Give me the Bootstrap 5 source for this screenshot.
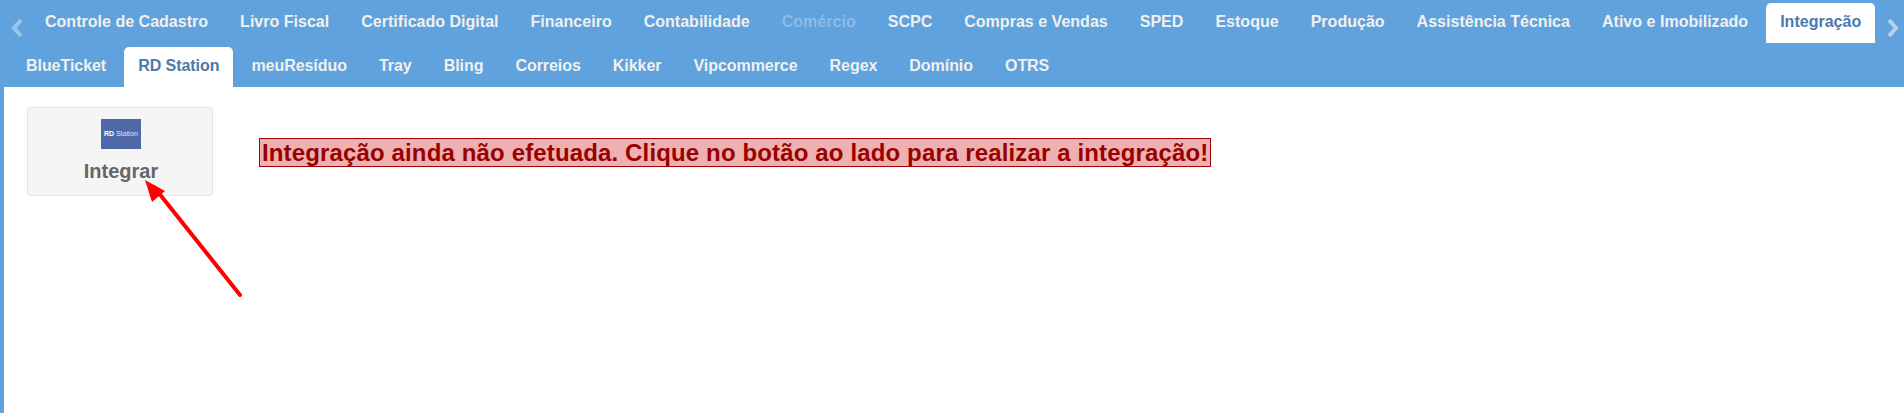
<!DOCTYPE html>
<html lang="pt-BR">
<head>
    <meta charset="UTF-8">
    <title>Integração - RD Station</title>
    <link href="https://cdn.jsdelivr.net/npm/bootstrap@5.3.0/dist/css/bootstrap.min.css" rel="stylesheet">
    <style>
        html, body { height: 100%; overflow: hidden; }
        body { font-family: "Liberation Sans", Arial, sans-serif; background: #fff; }
        .page-wrap { position: relative; min-height: 100%; border-left: 4px solid #5fa2dd; }
        .tab-bar { background: #5fa2dd; height: 87px; margin-left: -4px; padding-top: 3px; }
        .tab-row { height: 40px; flex-wrap: nowrap; gap: 4px; }
        .tab-row-main { padding-left: 31px; margin-bottom: 4px; letter-spacing: .02px; }
        .tab-row-sub { padding-left: 12px; letter-spacing: -.05px; }
        .tab-row .nav-link { height: 40px; padding: 0 14px; line-height: 38px; font-size: 16px; font-weight: 700; color: #f0f0f0; border-radius: 5px 5px 0 0; white-space: nowrap; }
        .tab-row .nav-link.active { background: #fff; color: #4a79ac; }
        .tab-row .nav-link.disabled { color: #8ebbe6; }
        .tab-arrow { position: absolute; top: 18px; width: 14px; height: 20px; }
        .tab-arrow-left { left: 6px; }
        .tab-arrow-right { left: 1882px; }
        .content-row { padding: 20px 0 0 23px; gap: 46px; }
        .integrate-btn { width: 186px; height: 89px; padding: 11px 0 12px 2px; background: #f5f5f5; border: 1px solid #e3e3e3; border-radius: 4px; color: #666; font-size: 20px; font-weight: 700; line-height: 24px; }
        .rd-logo { width: 40px; height: 30px; margin: 0 auto 10px; background: #4f68a8; color: #dfe4f2; font-size: 7px; line-height: 30px; font-weight: 400; white-space: nowrap; }
        .rd-logo b { color: #fff; }
        .integrate-msg { margin-top: 31px; height: 29px; padding: 0 2px; background: #eeb0b0; border: 1px solid #a00000; color: #990000; font-size: 24px; font-weight: 700; line-height: 27px; white-space: nowrap; letter-spacing: .14px; }
        .pointer-arrow { position: absolute; left: 136px; top: 172px; width: 120px; height: 135px; }
    </style>
</head>
<body>
<div class="page-wrap">
    <div class="tab-bar">
        <ul class="nav tab-row tab-row-main">
            <li class="nav-item"><a class="nav-link" href="#">Controle de Cadastro</a></li>
            <li class="nav-item"><a class="nav-link" href="#">Livro Fiscal</a></li>
            <li class="nav-item"><a class="nav-link" href="#">Certificado Digital</a></li>
            <li class="nav-item"><a class="nav-link" href="#">Financeiro</a></li>
            <li class="nav-item"><a class="nav-link" href="#">Contabilidade</a></li>
            <li class="nav-item"><a class="nav-link disabled" href="#">Comércio</a></li>
            <li class="nav-item"><a class="nav-link" href="#">SCPC</a></li>
            <li class="nav-item"><a class="nav-link" href="#">Compras e Vendas</a></li>
            <li class="nav-item"><a class="nav-link" href="#">SPED</a></li>
            <li class="nav-item"><a class="nav-link" href="#">Estoque</a></li>
            <li class="nav-item"><a class="nav-link" href="#">Produção</a></li>
            <li class="nav-item"><a class="nav-link" href="#">Assistência Técnica</a></li>
            <li class="nav-item"><a class="nav-link" href="#">Ativo e Imobilizado</a></li>
            <li class="nav-item"><a class="nav-link active" href="#">Integração</a></li>
        </ul>
        <ul class="nav tab-row tab-row-sub">
            <li class="nav-item"><a class="nav-link" href="#">BlueTicket</a></li>
            <li class="nav-item"><a class="nav-link active" href="#">RD Station</a></li>
            <li class="nav-item"><a class="nav-link" href="#">meuResíduo</a></li>
            <li class="nav-item"><a class="nav-link" href="#">Tray</a></li>
            <li class="nav-item"><a class="nav-link" href="#">Bling</a></li>
            <li class="nav-item"><a class="nav-link" href="#">Correios</a></li>
            <li class="nav-item"><a class="nav-link" href="#">Kikker</a></li>
            <li class="nav-item"><a class="nav-link" href="#">Vipcommerce</a></li>
            <li class="nav-item"><a class="nav-link" href="#">Regex</a></li>
            <li class="nav-item"><a class="nav-link" href="#">Domínio</a></li>
            <li class="nav-item"><a class="nav-link" href="#">OTRS</a></li>
        </ul>
    </div>

    <svg class="tab-arrow tab-arrow-left" viewBox="0 0 14 20"><path d="M11 2 L4 10 L11 18" fill="none" stroke="#9cc5ec" stroke-width="4"/></svg>
    <svg class="tab-arrow tab-arrow-right" viewBox="0 0 14 20"><path d="M3 2 L10 10 L3 18" fill="none" stroke="#b4d3f0" stroke-width="4"/></svg>

    <div class="d-flex align-items-start content-row">
        <button type="button" class="btn integrate-btn text-center">
            <div class="rd-logo"><b>RD</b> Station</div>
            Integrar
        </button>
        <div class="integrate-msg">Integração ainda não efetuada. Clique no botão ao lado para realizar a integração!</div>
    </div>

    <svg class="pointer-arrow" viewBox="0 0 120 135">
        <line x1="100" y1="123" x2="14" y2="15" stroke="#ff0000" stroke-width="4" stroke-linecap="round"/>
        <polygon points="5,8 25,19 12,30" fill="#ff0000"/>
    </svg>
</div>
</body>
</html>
